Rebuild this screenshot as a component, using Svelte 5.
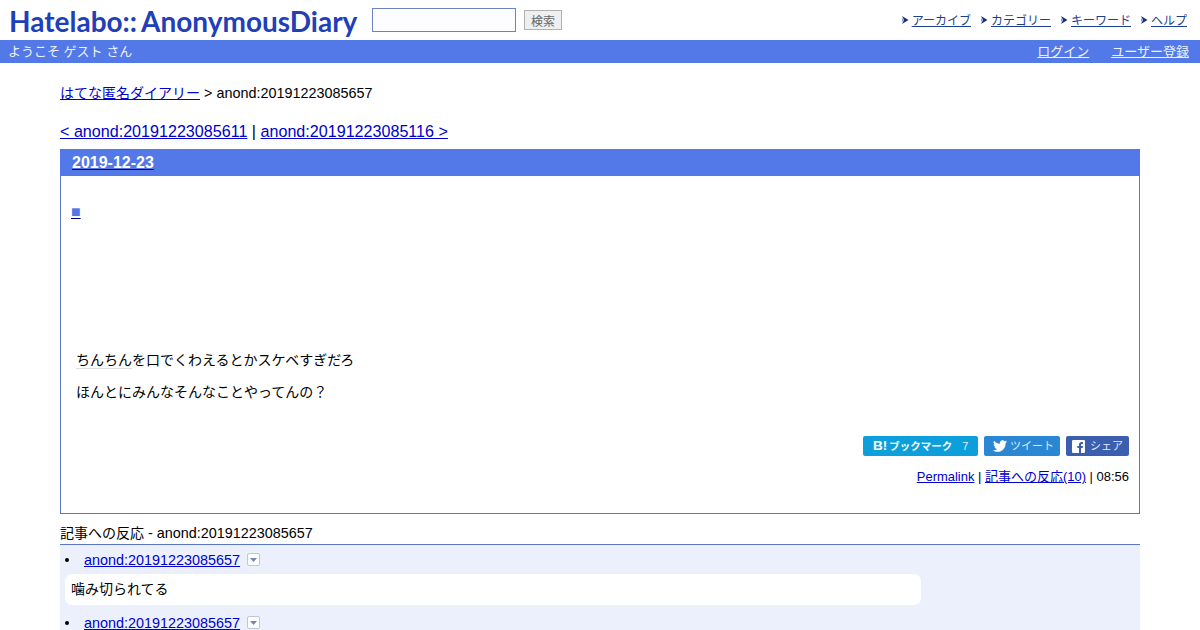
<script>
  const nav = ['アーカイブ', 'カテゴリー', 'キーワード', 'ヘルプ'];
  const refs = [{ id: 'anond:20191223085657', text: '噛み切られてる' }, { id: 'anond:20191223085657', text: '' }];
</script>

<div class="page">
  <header class="top">
    <div class="logo"><span>Hatelabo::</span><span class="logo2">AnonymousDiary</span></div>
    <form class="search">
      <input class="q" type="text" />
      <button class="go" type="button">検索</button>
    </form>
    <ul class="nav">
      {#each nav as n}
        <li>
          <svg class="arrow" width="7" height="10" viewBox="0 0 7 10"><path d="M0 1l6.500 4L0 9l2-4z" fill="#16307c" /><path d="M0 3l2 2-2 2z" fill="#7f9bd8" /></svg>
          <a href="#n">{n}</a>
        </li>
      {/each}
    </ul>
  </header>

  <div class="bar">
    <span>ようこそ ゲスト さん</span>
    <div class="barlinks"><a href="#l">ログイン</a><a href="#r">ユーザー登録</a></div>
  </div>

  <main class="main">
    <p class="crumb"><a class="blue ja" href="#h">はてな匿名ダイアリー</a> &gt; anond:20191223085657</p>
    <p class="pager"><a class="blue" href="#p">&lt; anond:20191223085611</a> | <a class="blue" href="#n">anond:20191223085116 &gt;</a></p>

    <section class="day">
      <h2 class="dayhead"><a class="navy" href="#d"><span class="white">2019-12-23</span></a></h2>
      <div class="body">
        <div class="square"><a class="navy" href="#s"><span class="sq">■</span></a></div>
        <div class="text ja">
          <p><span class="kw">ちんちん</span>を口でくわえるとかスケベすぎだろ</p>
          <p>ほんとにみんなそんなことやってんの？</p>
        </div>
        <div class="share">
          <span class="btn hb"><b class="bm">B!</b><b class="bk">ブックマーク</b><span class="count">7</span></span>
          <span class="btn tw">
            <svg width="14" height="12" viewBox="0 0 24 20"><path fill="#fff" d="M24 2.400c-.9.4-1.800.7-2.800.8 1-.6 1.800-1.600 2.200-2.700-1 .6-2 1-3.100 1.200C19.300.7 18 0 16.600 0c-2.700 0-4.900 2.200-4.900 4.900 0 .4 0 .8.100 1.100C7.700 5.800 4.100 3.900 1.700.9 1.300 1.600 1 2.500 1 3.400c0 1.700.9 3.200 2.200 4.100-.8 0-1.600-.2-2.200-.6v.1c0 2.400 1.700 4.400 3.900 4.800-.4.100-.8.200-1.300.2-.3 0-.6 0-.9-.1.6 2 2.400 3.400 4.600 3.400-1.700 1.300-3.800 2.100-6.100 2.100-.4 0-.8 0-1.200-.1C2.200 19.200 4.800 20 7.500 20c9.100 0 14-7.500 14-14v-.6c1-.7 1.800-1.600 2.500-3z" /></svg>
            <span>ツイート</span>
          </span>
          <span class="btn fb">
            <svg width="13" height="13" viewBox="0 0 13 13"><path fill="#fff" fill-rule="evenodd" d="M1 0h11a1 1 0 0 1 1 1v11a1 1 0 0 1-1 1H9V8h1.700l.3-2H9V5c0-.6.200-1 1-1h1V2.200C10.700 2.100 10.200 2 9.600 2 8 2 7 3 7 4.700V6H5.300v2H7v5H1a1 1 0 0 1-1-1V1a1 1 0 0 1 1-1z" /></svg>
            <span>シェア</span>
          </span>
        </div>
        <p class="foot"><a class="blue" href="#pl">Permalink</a> | <a class="blue" href="#rf"><span class="j13">記事への反応</span>(10)</a> | 08:56</p>
      </div>
    </section>

    <h3 class="rhead"><span class="ja">記事への反応</span> - anond:20191223085657</h3>
    <ul class="refs">
      {#each refs as r}
        <li>
          <div class="refline">
            <a class="blue" href="#i">{r.id}</a>
            <span class="drop"><svg width="7" height="4" viewBox="0 0 7 4"><path d="M0 0h7L3.500 4z" fill="#7786ad" /></svg></span>
          </div>
          {#if r.text}<div class="bubble"><span class="ja">{r.text}</span></div>{/if}
        </li>
      {/each}
    </ul>
  </main>
</div>

<style>
  :global(body) { margin: 0; background: #fff; }
  .page {
    height: 630px; overflow: hidden; color: #000;
    font-family: "Liberation Sans", "Noto Sans CJK JP", sans-serif;
  }
  a { color: inherit; }
  .blue { color: #0000cc; }
  .navy { color: #000080; }
  .white { color: #fff; }
  .ja { font-size: 14px; }
  .j13 { font-size: 13px; }
  p { margin: 0; }

  .top { height: 40px; display: flex; align-items: center; padding: 0 13px 0 9px; }
  .logo {
    width: 350px; margin-top: 2px; white-space: nowrap; color: #1f40b8;
    font: 700 28px/1 "Lato", sans-serif;
  }
  .logo2 { margin-left: 4px; }
  .search { display: flex; align-items: center; margin-left: 13px; gap: 8px; }
  .q { width: 144px; height: 24px; box-sizing: border-box; border: 1px solid #6c80c4; padding: 0; background: #fdfdff; }
  .go {
    width: 38px; height: 20px; box-sizing: border-box; padding: 0; border: 1px solid #b0b0b0;
    background: #efefef; color: #666; font: 12px "Liberation Sans", "Noto Sans CJK JP", sans-serif;
  }
  .nav { list-style: none; margin: -1px 0 0 auto; padding: 0; display: flex; gap: 10px; font-size: 12px; color: #1d3f8f; }
  .nav li { display: flex; align-items: center; gap: 3px; }

  .bar {
    height: 23px; background: #5279e7; color: #eef2ff; font-size: 13px; line-height: 23px;
    display: flex; justify-content: space-between; padding: 0 11px 0 8px;
  }
  .barlinks { display: flex; gap: 22px; }

  .main { padding: 0 60px; }
  .crumb { margin-top: 21px; font-size: 14.400px; line-height: 18px; }
  .pager { margin-top: 19px; font-size: 16.128px; line-height: 20px; }

  .day { margin-top: 8px; border: 1px solid #5a76c4; height: 365px; box-sizing: border-box; }
  .dayhead {
    margin: -1px -1px 0; height: 27px; background: #5279e7; padding-left: 12px;
    font-size: 16px; line-height: 27px; font-weight: 700;
  }
  .body { padding: 0 10px; }
  .square { margin-top: 28px; height: 16px; line-height: 16px; font-size: 16px; }
  .sq { color: #5279e7; }
  .text { margin: 130px 0 0 5px; line-height: 20px; }
  .text p { margin-bottom: 12px; }
  .kw { border-bottom: 1px solid #ddd; }
  .share { margin-top: 34px; display: flex; justify-content: flex-end; gap: 6px; }
  .btn {
    height: 20px; box-sizing: border-box; border-radius: 2px; color: #dfe8fa; font-size: 11px; line-height: 20px;
    display: flex; align-items: center; white-space: nowrap;
  }
  .hb { width: 115px; background: #0d9fdb; color: #fff; padding-left: 10px; }
  .bm { margin-right: 2px; font-size: 13.500px; }
  .bk { font-size: 10.500px; }
  .count { margin-left: 10px; color: #dff2fb; }
  .tw { width: 76px; background: #2b87d3; padding-left: 9px; gap: 3px; }
  .fb { width: 63px; background: #3b5fae; padding-left: 6px; gap: 5px; }
  .foot { margin-top: 12px; text-align: right; font-size: 12.960px; line-height: 18px; }

  .rhead { margin: 9px 0 0; font-weight: 400; font-size: 14.400px; line-height: 21px; border-bottom: 1px solid #5a76c4; }
  .refs { list-style: none; margin: 0; padding: 0 0 0 5px; background: #ebf0fc; }
  .refs li { font-size: 14.400px; }
  .refline { height: 29px; display: flex; align-items: center; gap: 7px; }
  .refline::before { content: ""; width: 4px; height: 4px; border-radius: 50%; background: #000; margin-right: 8px; }
  .refs li + li .refline { margin-top: 3px; }
  .drop {
    width: 13px; height: 13px; box-sizing: border-box; border: 1px solid #bcc6dc; border-radius: 2px; background: #fff;
    display: flex; align-items: center; justify-content: center;
  }
  .bubble { width: 850px; height: 31px; padding-left: 6px; line-height: 31px; background: #fff; border-radius: 7px; }
</style>
